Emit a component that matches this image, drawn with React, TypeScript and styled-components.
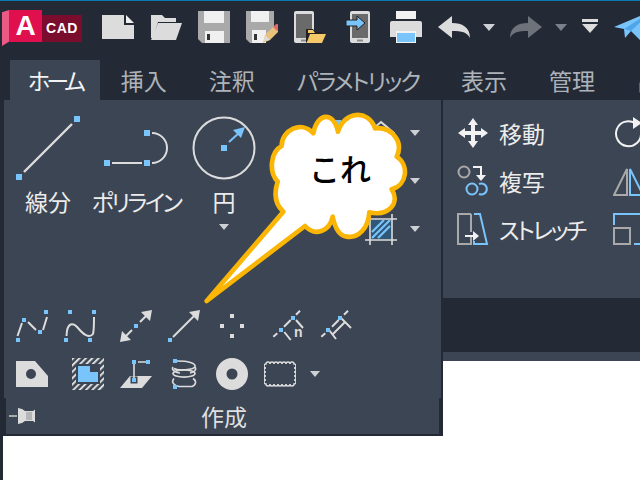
import styled, { createGlobalStyle } from "styled-components";

const DARK = "#232a35";
const PANEL = "#3c4554";
const BLUE = "#79c4fb";
const LIGHT = "#dcdcdc";
const MID = "#a9a9a9";

const GlobalStyle = createGlobalStyle`
  html, body {
    margin: 0;
    padding: 0;
    background: #ffffff;
  }
`;

const Page = styled.div`
  position: relative;
  display: flex;
  flex-direction: column;
  width: 640px;
  height: 480px;
  overflow: hidden;
  background: ${DARK};
  font-family: "Noto Sans CJK JP", "Noto Sans", sans-serif;
  font-feature-settings: "palt";
`;

const TopBar = styled.header`
  display: flex;
  align-items: flex-start;
  gap: 16px;
  height: 60px;
  padding: 10px 0 0 2px;
  box-sizing: border-box;
  border-top: 1px solid #0b7bb5;
  flex-shrink: 0;
`;

const Logo = styled.div`
  display: flex;
  align-items: center;
  height: 36px;
  margin-right: 4px;
  margin-top: -1px;
`;

const LogoMark = styled.div`
  position: relative;
  display: flex;
  align-items: center;
  justify-content: center;
  width: 33px;
  height: 32px;
  margin-left: 7px;
  margin-top: -4px;
  background: #e0104f;
  color: #fff;
  font-family: "Liberation Sans", sans-serif;
  font-size: 28px;
  font-weight: 700;

  &::before {
    content: "";
    position: absolute;
    left: -7px;
    top: 0;
    width: 7px;
    height: 36px;
    background: #ea5a84;
    clip-path: polygon(0 6%, 100% 0, 100% 88%, 0 100%);
  }
`;

const LogoName = styled.div`
  display: flex;
  align-items: center;
  justify-content: center;
  width: 40px;
  height: 27px;
  background: #7a0c2e;
  color: #fff;
  font-family: "Liberation Sans", sans-serif;
  font-size: 14px;
  font-weight: 700;
  letter-spacing: 0.5px;
`;

const Glyph = styled.svg<{ $ml?: number }>`
  display: block;
  flex-shrink: 0;
  margin-left: ${(p) => p.$ml ?? 0}px;
`;

const Caret = styled.span<{ $dim?: boolean; $big?: boolean }>`
  display: block;
  flex-shrink: 0;
  width: 0;
  height: 0;
  border-left: ${(p) => (p.$big ? 6 : 5)}px solid transparent;
  border-right: ${(p) => (p.$big ? 6 : 5)}px solid transparent;
  border-top: ${(p) => (p.$big ? 7 : 6)}px solid ${(p) => (p.$dim ? "#7b818b" : "#cdd0d5")};
`;

const BarCaret = styled(Caret)`
  margin: 13px -1px 0 -3px;
`;

const RowCaret = styled(Caret)`
  margin-left: 14px;
`;

const TabBar = styled.nav`
  display: flex;
  height: 40px;
  padding-left: 10px;
  flex-shrink: 0;
`;

const Tab = styled.div<{ $active?: boolean; $tight?: number }>`
  display: flex;
  align-items: center;
  flex-shrink: 0;
  padding: 0 ${(p) => (p.$active ? 18 : 21)}px;
  font-size: 23px;
  line-height: 40px;
  white-space: nowrap;
  letter-spacing: ${(p) => p.$tight ?? 0}px;
  color: ${(p) => (p.$active ? "#f2f2f2" : "#aeb3ba")};
  background: ${(p) => (p.$active ? PANEL : "transparent")};
`;

const Workspace = styled.main`
  display: flex;
  align-items: flex-start;
  flex: 1;
  min-height: 0;
  border-left: 3px solid ${DARK};
  background: #ffffff;
`;

const DrawPanel = styled.section`
  display: flex;
  flex-direction: column;
  flex-shrink: 0;
  width: 440px;
  height: 336px;
  box-sizing: border-box;
  border-left: 1px solid ${DARK};
  border-right: 2px solid ${DARK};
  border-bottom: 2px solid ${DARK};
  background: ${DARK};
`;

const DrawBody = styled.div`
  display: flex;
  flex-direction: column;
  height: 298px;
  box-sizing: border-box;
  padding-top: 9px;
  background: ${PANEL};
`;

const ToolRow = styled.div`
  display: flex;
  flex-shrink: 0;
  height: 201px;
`;

const Tool = styled.div`
  display: flex;
  flex-direction: column;
  align-items: center;
  width: 88px;
  padding-top: 7px;
`;

const ToolLabel = styled.div<{ $tight?: number }>`
  margin-top: 8px;
  margin-bottom: 10px;
  font-size: 23px;
  line-height: 26px;
  white-space: nowrap;
  letter-spacing: ${(p) => p.$tight ?? 0}px;
  color: #ececec;
`;

const Stack = styled.div`
  display: flex;
  flex-direction: column;
  margin-left: 52px;
`;

const StackRow = styled.div`
  display: flex;
  align-items: center;
  height: 48px;
  gap: 13px;
`;

const IconRow = styled.div`
  display: flex;
  align-items: center;
  flex-shrink: 0;
  height: 32px;
  padding-left: 12px;

  & + & {
    margin-top: 16px;
  }
`;

const Footer = styled.div`
  display: grid;
  grid-template-columns: 40px 1fr 40px;
  align-items: center;
  height: 36px;
  margin: 0 0 0 2px;
  width: 433px;
  background: ${PANEL};
`;

const FooterTitle = styled.div`
  text-align: center;
  font-size: 23px;
  line-height: 36px;
  color: #dfdfdf;
  padding-left: 3px;
`;

const SideColumn = styled.div`
  display: flex;
  flex-direction: column;
  flex: 1;
  min-width: 0;
`;

const ModifyPanel = styled.section`
  display: flex;
  gap: 12px;
  height: 198px;
  padding: 9px 0 0 14px;
  box-sizing: border-box;
  overflow: hidden;
  background: ${PANEL};
`;

const ModifyColumn = styled.div<{ $width: number }>`
  display: flex;
  flex-direction: column;
  flex-shrink: 0;
  width: ${(p) => p.$width}px;
`;

const ModifyRow = styled.div`
  display: flex;
  align-items: center;
  gap: 10px;
  height: 48px;
  font-size: 23px;
  white-space: nowrap;
  color: #ececec;
`;

const Tight = styled.span`
  letter-spacing: -2.4px;
`;

const DarkGap = styled.div`
  height: 54px;
  background: ${DARK};
`;

const Strip = styled.div`
  height: 9px;
  background: ${PANEL};
`;

const Callout = styled.div`
  position: absolute;
  left: 200px;
  top: 100px;
  width: 240px;
  height: 210px;
`;

const CalloutShape = styled.svg`
  position: absolute;
  left: 0;
  top: 0;
`;

const CalloutText = styled.div`
  position: absolute;
  left: 108px;
  top: 45px;
  width: 64px;
  text-align: center;
  font-size: 31px;
  line-height: 46px;
  font-weight: 500;
  font-feature-settings: normal;
  color: #000;
`;

const Sq = ({ x, y, s = 4 }: { x: number; y: number; s?: number }) => (
  <rect x={x} y={y} width={s} height={s} fill={BLUE} />
);

const Icon32 = ({ children, ml }: { children?: React.ReactNode; ml?: number }) => (
  <Glyph width="32" height="32" viewBox="0 0 32 32" $ml={ml} fill="none">
    {children}
  </Glyph>
);

const Icon64 = ({ children }: { children: React.ReactNode }) => (
  <Glyph width="64" height="64" viewBox="0 0 64 64" fill="none">
    {children}
  </Glyph>
);

const NewIcon = () => (
  <Icon32>
    <path d="M0 4H22V14H32V28H0z" fill={LIGHT} />
    <path d="M24 4L32 12H24z" fill="#f0f0f0" />
  </Icon32>
);

const OpenIcon = () => (
  <Icon32>
    <path d="M1 26V3h11l3 3h11v4H8L3 26z" fill={LIGHT} transform="translate(0 1)" />
    <path d="M8 12h24l-6 17H1z" fill={LIGHT} />
  </Icon32>
);

const SaveIcon = () => (
  <Icon32>
    <path d="M0 0h32v32H4l-4-4z" fill={MID} />
    <rect x="6" y="0" width="20" height="12" fill="#f0f0f0" />
    <rect x="7" y="20" width="19" height="12" fill="#f0f0f0" />
    <rect x="9" y="23" width="3" height="6" fill="#333" />
  </Icon32>
);

const SaveAsIcon = () => (
  <Icon32>
    <path d="M0 0h28v22L18 32H4l-4-4z" fill={MID} />
    <rect x="5" y="0" width="18" height="11" fill="#f0f0f0" />
    <rect x="6" y="19" width="14" height="13" fill="#f0f0f0" />
    <rect x="8" y="23" width="3" height="6" fill="#333" />
    <path d="M17 32l2-8 9-9 5 5-9 9z" fill="#e8c17a" />
    <path d="M18 30l1-6 5 5z" fill={LIGHT} />
    <path d="M27 16l2-2a2.4 2.4 0 0 1 4 4l-2 2z" fill="#e06a6a" />
  </Icon32>
);

const PhoneOpenIcon = () => (
  <Icon32>
    <rect x="0" y="0" width="20" height="32" rx="2" fill={LIGHT} />
    <rect x="2" y="3" width="16" height="24" fill="#6a6a6a" />
    <rect x="7" y="28.500" width="6" height="2" fill="#8a8a8a" />
    <path d="M12 32V18h7l2 3h7v3h-8z" fill="#222" />
    <path d="M13 31l3-8h16l-4 9H13z" fill="#f5c86a" />
    <path d="M14 22v-3h5l2 3z" fill="#f5c86a" />
  </Icon32>
);

const PhoneSendIcon = () => (
  <Icon32>
    <rect x="8" y="0" width="20" height="32" rx="2" fill={LIGHT} />
    <rect x="10" y="3" width="16" height="24" fill="#6a6a6a" />
    <rect x="15" y="28.500" width="6" height="2" fill="#8a8a8a" />
    <path d="M4 9h11V5l8 7-8 7v-4H4z" fill={BLUE} stroke="#222" strokeWidth="1" />
  </Icon32>
);

const PrintIcon = () => (
  <Icon32>
    <rect x="6" y="0" width="20" height="8" fill="#f2f2f2" />
    <path d="M0 12a2 2 0 0 1 2-2h28a2 2 0 0 1 2 2v14h-6v-6H6v6H0z" fill={LIGHT} />
    <rect x="6" y="20" width="20" height="12" fill="#f2f2f2" />
    <rect x="7" y="22" width="18" height="9" fill={BLUE} />
  </Icon32>
);

const UndoIcon = () => (
  <Icon32>
    <path d="M0 16L14 5v7c10 0 18 4 18 15-3-6-8-7-18-7v7z" fill={LIGHT} />
  </Icon32>
);

const RedoIcon = () => (
  <Icon32>
    <path d="M32 16L18 5v7C8 12 0 16 0 27c3-6 8-7 18-7v7z" fill="#6d727b" />
  </Icon32>
);

const MenuIcon = () => (
  <Glyph width="16" height="32" viewBox="0 0 16 32" fill="none">
    <rect x="0" y="8" width="16" height="3" fill={LIGHT} />
    <path d="M0 13h16l-8 9z" fill={LIGHT} />
  </Glyph>
);

const PlaneIcon = () => (
  <Glyph width="40" height="40" viewBox="0 0 40 40" fill="none">
    <path d="M0 16L38 0 26 29 17 20 11 27 10 18z" fill={BLUE} />
    <path d="M10 18L38 0 17 20z" fill="#4ea6ea" />
  </Glyph>
);

const LineIcon = () => (
  <Icon64>
    <path d="M56 8L8 56" stroke={LIGHT} strokeWidth="2.4" />
    <Sq x={58} y={0} s={6} />
    <Sq x={0} y={58} s={6} />
  </Icon64>
);

const PolylineIcon = () => (
  <Icon64>
    <path d="M8 47H38M48 17A15 15 0 0 1 48 47" stroke={LIGHT} strokeWidth="2" />
    <Sq x={0} y={44} s={6} />
    <Sq x={40} y={44} s={6} />
    <Sq x={40} y={14} s={6} />
  </Icon64>
);

const CircleIcon = () => (
  <Icon64>
    <circle cx="32" cy="32" r="30.500" stroke={LIGHT} strokeWidth="2" />
    <Sq x={29} y={29} s={6} />
    <path d="M37 26L48 16" stroke={BLUE} strokeWidth="2" />
    <path d="M53 11l-12 3 8 8z" fill={BLUE} />
  </Icon64>
);

const SplineFitIcon = () => (
  <Icon32 ml={0}>
    <path d="M1.500 26L6 13M12 12l8 8M27 20l4-13" stroke={LIGHT} strokeWidth="2" />
    <Sq x={28} y={0} />
    <Sq x={6} y={8} />
    <Sq x={22} y={20} />
    <Sq x={0} y={28} />
  </Icon32>
);

const SplineCvIcon = () => (
  <Icon32 ml={16}>
    <path d="M2.500 26C3 12 9 12 14 18C19 24 25 29 29 24C30 20 30 12 30 7" stroke={LIGHT} strokeWidth="2" />
    <Sq x={4} y={0} />
    <Sq x={28} y={0} />
    <Sq x={0} y={28} />
    <Sq x={24} y={28} />
  </Icon32>
);

const XlineIcon = () => (
  <Icon32 ml={24}>
    <path d="M20 12L26 6M6 26L12 20" stroke={LIGHT} strokeWidth="2" />
    <path d="M32 0l-11 2 9 9zM0 32l11-2-9-9z" fill={LIGHT} />
    <Sq x={14} y={14} />
  </Icon32>
);

const RayIcon = () => (
  <Icon32 ml={16}>
    <path d="M5 27L26 6" stroke={LIGHT} strokeWidth="2" />
    <path d="M32 0l-11 2 9 9z" fill={LIGHT} />
    <Sq x={0} y={28} />
  </Icon32>
);

const PointsIcon = () => (
  <Icon32 ml={16}>
    <g fill={LIGHT}>
      <rect x="14" y="4" width="4" height="4" />
      <rect x="4" y="14" width="4" height="4" />
      <rect x="24" y="14" width="4" height="4" />
      <rect x="14" y="24" width="4" height="4" />
    </g>
  </Icon32>
);

const DivideIcon = () => (
  <Icon32 ml={24}>
    <path d="M1.300 26.700L5.300 23.300M12 16.700L18.700 10M24 4.700L28 .7M12.300 22L18.700 30M24 10L31 18" stroke={LIGHT} strokeWidth="2" />
    <Sq x={19} y={6} />
    <Sq x={7} y={18} />
    <text x="22" y="27" fontFamily="Liberation Sans, sans-serif" fontSize="14" fontWeight="700" fill={LIGHT}>n</text>
  </Icon32>
);

const MeasureIcon = () => (
  <Icon32 ml={16}>
    <path d="M1.300 26.700L5.300 23.300M12 16.700L18.700 10M24 4.700L28 .7" stroke={LIGHT} strokeWidth="2" />
    <path d="M13 24L25 12M9 20L16 29M21 8L31 18" stroke={LIGHT} strokeWidth="2" />
    <Sq x={18} y={6} />
    <Sq x={6} y={18} />
  </Icon32>
);

const RegionIcon = () => (
  <Icon32 ml={0}>
    <path d="M0 3H19L32 18V29H0z" fill={LIGHT} />
    <circle cx="15" cy="16" r="5" fill={PANEL} />
  </Icon32>
);

const HatchIcon = () => (
  <Icon32 ml={24}>
    <defs>
      <pattern id="hatchStripes" width="4.500" height="4.500" patternUnits="userSpaceOnUse" patternTransform="rotate(45)">
        <rect width="4.500" height="4.500" fill={PANEL} />
        <rect width="2" height="4.500" fill={LIGHT} />
      </pattern>
    </defs>
    <rect width="32" height="32" fill="url(#hatchStripes)" />
    <rect x="4" y="6" width="24" height="20" fill={PANEL} />
    <path d="M6 8H18V14H26V24H6z" fill={BLUE} />
  </Icon32>
);

const BoundaryIcon = () => (
  <Icon32 ml={16}>
    <path d="M0 30L10 18H32L22 30z" fill={LIGHT} />
    <rect x="10.500" y="18.500" width="7" height="7" fill={PANEL} />
    <path d="M14 6V20M18 4H26" stroke={LIGHT} strokeWidth="1.600" />
    <Sq x={12} y={2} />
    <Sq x={26} y={2} />
    <Sq x={12} y={20} />
  </Icon32>
);

const HelixIcon = () => (
  <Icon32 ml={16}>
    <g stroke={LIGHT} strokeWidth="1.600">
      <path d="M9 3C20 3 28 5 27 8.500S10 13 6 10.500" />
      <ellipse cx="16" cy="15.500" rx="11" ry="3.600" />
      <path d="M6 20.500C2 25 8 28 11 28.500H24C28 27 29 23 25 20.500" />
      <path d="M5 9C3 12 8 15 12 15M27 9C29 12 26 14 22 15" />
    </g>
    <Sq x={5} y={1} />
    <Sq x={5} y={27} />
  </Icon32>
);

const DonutIcon = () => (
  <Icon32 ml={16}>
    <circle cx="16" cy="16" r="16" fill={LIGHT} />
    <circle cx="16" cy="16" r="5.500" fill={PANEL} />
  </Icon32>
);

const revcloudPath =
  "M2 6" +
  "a2 2 0 0 1 4 0".repeat(7) +
  "a2 2 0 0 1 0 4".repeat(5) +
  "a2 2 0 0 1 -4 0".repeat(7) +
  "a2 2 0 0 1 0 -4".repeat(5) +
  "z";

const RevcloudIcon = () => (
  <Icon32 ml={16}>
    <path d={revcloudPath} stroke={LIGHT} strokeWidth="1.500" />
  </Icon32>
);

const RectHatchIcon = () => (
  <Icon32>
    <path d="M5 1V32M27 1V32M0 6H32M0 27H32" stroke={LIGHT} strokeWidth="1.600" />
    <rect x="6" y="7" width="20" height="19" fill="#2f5878" />
    <path d="M7 19L19 7M7 25L25 7M13 25L25 13" stroke={BLUE} strokeWidth="2.200" />
  </Icon32>
);

const PolygonPeak = () => (
  <Icon32>
    <path d="M16 5L29 16V28H3V16z" stroke={LIGHT} strokeWidth="2" />
  </Icon32>
);

const HiddenBlue = () => (
  <Icon32>
    <Sq x={15} y={3} s={6} />
  </Icon32>
);

const PinIcon = () => (
  <Glyph width="28" height="20" viewBox="0 0 28 20" fill="none" $ml={3}>
    <path d="M0 10H8" stroke={MID} strokeWidth="2" />
    <path d="M9 2L13 3L16 5H24L26 3.500V16.500L24 15H16L13 17L9 18z" fill={LIGHT} />
    <rect x="17" y="6" width="6" height="8" fill="#b5b5b5" />
  </Glyph>
);

const MoveIcon = () => (
  <Icon32>
    <path d="M16 1L21 8H18V14H24V11L31 16L24 21V18H18V24H21L16 31L11 24H14V18H8V21L1 16L8 11V14H14V8H11z" fill="#f2f2f2" />
  </Icon32>
);

const CopyIcon = () => (
  <Icon32>
    <circle cx="7" cy="7" r="5.500" stroke={MID} strokeWidth="2" />
    <path d="M16 2H24V11" stroke="#f2f2f2" strokeWidth="2" />
    <path d="M19 10h10l-5 6z" fill="#f2f2f2" />
    <circle cx="15" cy="24" r="5.500" stroke={BLUE} strokeWidth="2" />
    <path d="M22 19a5.500 5.500 0 1 1 0 10" stroke={BLUE} strokeWidth="2" />
  </Icon32>
);

const StretchIcon = () => (
  <Icon32>
    <path d="M14 1H1V31H14V23M14 1V19" stroke={MID} strokeWidth="2" />
    <path d="M17 1H23L30 31H17V28" stroke={BLUE} strokeWidth="2" />
    <path d="M8 23H18" stroke="#f2f2f2" strokeWidth="2" />
    <path d="M22 23l-6-5v10z" fill="#f2f2f2" />
  </Icon32>
);

const RotateIcon = () => (
  <Icon32>
    <path d="M22 6A12.500 12.500 0 1 0 28 16" stroke="#f2f2f2" strokeWidth="2" />
    <path d="M20 0l9 6-9 6z" fill="#f2f2f2" />
  </Icon32>
);

const MirrorIcon = () => (
  <Icon32>
    <path d="M14 4V30H1z" stroke={MID} strokeWidth="2" />
    <path d="M17 4V30H30z" stroke={BLUE} strokeWidth="2" />
  </Icon32>
);

const ScaleIcon = () => (
  <Icon32>
    <path d="M1 12V1H32" stroke={BLUE} strokeWidth="2" />
    <rect x="1" y="15" width="16" height="16" stroke={MID} strokeWidth="2" />
    <path d="M21 31H32" stroke={BLUE} strokeWidth="2" />
  </Icon32>
);

const CalloutCloud = () => (
  <CalloutShape width="240" height="210" viewBox="0 0 720 630" fill="none">
    <path
      d="M20 603L250 335C228 315 220 285 233 245C205 215 212 155 245 138
         C245 90 305 60 340 100C350 40 400 30 414 95C430 35 505 25 525 85
         C575 80 612 125 590 170C628 195 622 255 575 268C602 310 565 350 508 337
         C505 385 475 415 440 410C420 408 405 385 398 350C388 395 345 410 315 378Z"
      fill="#ffffff"
      stroke="#fab505"
      strokeWidth="14"
      strokeLinejoin="round"
    />
  </CalloutShape>
);

const stackIcons = [
  { key: "a", first: <HiddenBlue />, second: <PolygonPeak /> },
  { key: "b", first: <Icon32 />, second: <Icon32 /> },
  { key: "c", first: <Icon32 />, second: <RectHatchIcon /> },
];

function App(): JSX.Element {
  return (
    <Page>
      <GlobalStyle />
      <TopBar>
        <Logo>
          <LogoMark>A</LogoMark>
          <LogoName>CAD</LogoName>
        </Logo>
        <NewIcon />
        <OpenIcon />
        <SaveIcon />
        <SaveAsIcon />
        <PhoneOpenIcon />
        <PhoneSendIcon />
        <PrintIcon />
        <UndoIcon />
        <BarCaret $big />
        <RedoIcon />
        <BarCaret $big $dim />
        <MenuIcon />
        <PlaneIcon />
      </TopBar>
      <TabBar>
        <Tab $active $tight={-4}>ホーム</Tab>
        <Tab>挿入</Tab>
        <Tab>注釈</Tab>
        <Tab $tight={-2}>パラメトリック</Tab>
        <Tab>表示</Tab>
        <Tab>管理</Tab>
        <Tab>出力</Tab>
      </TabBar>
      <Workspace>
        <DrawPanel>
          <DrawBody>
            <ToolRow>
              <Tool>
                <LineIcon />
                <ToolLabel>線分</ToolLabel>
              </Tool>
              <Tool>
                <PolylineIcon />
                <ToolLabel $tight={-2.6}>ポリライン</ToolLabel>
              </Tool>
              <Tool>
                <CircleIcon />
                <ToolLabel>円</ToolLabel>
                <Caret />
              </Tool>
              <Stack>
                {stackIcons.map((row) => (
                  <StackRow key={row.key}>
                    {row.first}
                    {row.second}
                    <Caret />
                  </StackRow>
                ))}
              </Stack>
            </ToolRow>
            <IconRow>
              <SplineFitIcon />
              <SplineCvIcon />
              <XlineIcon />
              <RayIcon />
              <PointsIcon />
              <DivideIcon />
              <MeasureIcon />
            </IconRow>
            <IconRow>
              <RegionIcon />
              <HatchIcon />
              <BoundaryIcon />
              <HelixIcon />
              <DonutIcon />
              <RevcloudIcon />
              <RowCaret />
            </IconRow>
          </DrawBody>
          <Footer>
            <PinIcon />
            <FooterTitle>作成</FooterTitle>
          </Footer>
        </DrawPanel>
        <SideColumn>
          <ModifyPanel>
            <ModifyColumn $width={144}>
              <ModifyRow>
                <MoveIcon />
                移動
              </ModifyRow>
              <ModifyRow>
                <CopyIcon />
                複写
              </ModifyRow>
              <ModifyRow>
                <StretchIcon />
                <Tight>ストレッチ</Tight>
              </ModifyRow>
            </ModifyColumn>
            <ModifyColumn $width={60}>
              <ModifyRow>
                <RotateIcon />
              </ModifyRow>
              <ModifyRow>
                <MirrorIcon />
              </ModifyRow>
              <ModifyRow>
                <ScaleIcon />
              </ModifyRow>
            </ModifyColumn>
          </ModifyPanel>
          <DarkGap />
          <Strip />
        </SideColumn>
      </Workspace>
      <Callout>
        <CalloutCloud />
        <CalloutText>これ</CalloutText>
      </Callout>
    </Page>
  );
}

export default App;
